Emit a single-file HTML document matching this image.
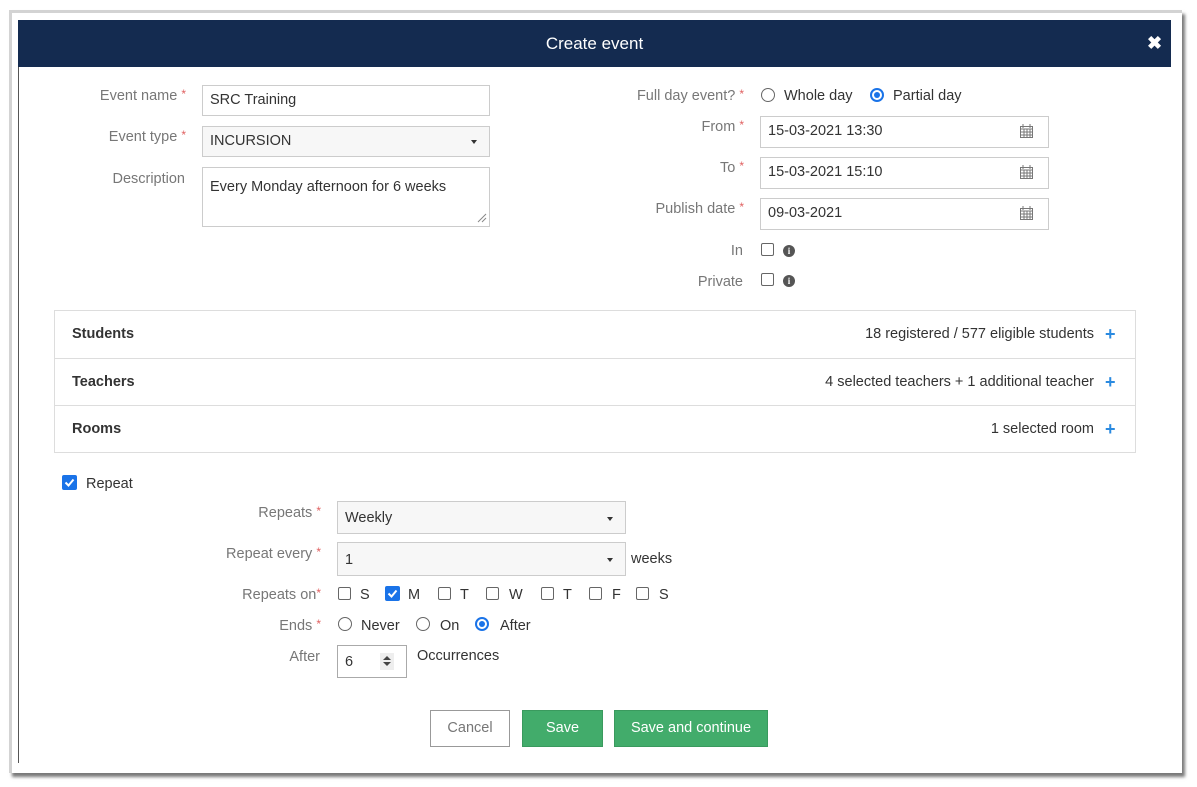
<!DOCTYPE html>
<html><head><style>
*{box-sizing:border-box;margin:0;padding:0}
body{width:1197px;height:787px;background:#fff;font-family:"Liberation Sans",sans-serif;font-size:14.5px;color:#333;position:relative;overflow:hidden}
.a{position:absolute}
.frame{left:9px;top:10px;width:1173px;height:763px;border:3px solid #d3d3d3;border-right:none;border-bottom:none;background:#fff;box-shadow:3px 4px 3px #7a7a7a}
.hdr{left:18px;top:20px;width:1153px;height:47px;background:#142b50;color:#fff;font-size:17px;text-align:center;line-height:47px}
.vl{left:18px;top:67px;width:1px;height:696px;background:#555}
.lbl{color:#777;text-align:right}
.req{color:#e06060;font-size:12px;vertical-align:top;position:relative;top:-1px}
.inp{border:1px solid #ccc;background:#fff;padding-left:7px;line-height:28px;color:#333}
.sel{background:#f7f7f7}
.caret{position:absolute;right:12px;top:13px;border-left:3.5px solid transparent;border-right:3.5px solid transparent;border-top:4px solid #333}
.cb{width:13px;height:13px;border:1px solid #666;border-radius:2px;background:#fff}
.rd{width:14px;height:14px;border:1px solid #666;border-radius:50%}
.rdk{width:14px;height:14px;border:2px solid #1a73e8;border-radius:50%;background:#fff}
.rdk:after{content:"";position:absolute;left:2px;top:2px;width:6px;height:6px;border-radius:50%;background:#1a73e8}
.info{width:12px;height:12px;border-radius:50%;background:#555;color:#fff;font:bold 9px "Liberation Serif",serif;text-align:center;line-height:12px}
.row{border:1px solid #ddd;background:#fff}
.plus{color:#2a8ae0;font-size:18px;font-weight:bold}
.btn{height:37px;line-height:35px;text-align:center;font-size:14.5px}
</style></head><body>
<div class="a frame"></div>
<div class="a hdr">Create event</div>
<div class="a" style="left:1147px;top:33px;color:#fff;font-size:18px;font-weight:bold">✖</div>
<div class="a vl"></div>

<div class="a lbl" style="left:60px;top:88px;width:126px">Event name <span class="req">*</span></div>
<div class="a inp" style="left:202px;top:85px;width:288px;height:31px">SRC Training</div>
<div class="a lbl" style="left:60px;top:129px;width:126px">Event type <span class="req">*</span></div>
<div class="a inp sel" style="left:202px;top:126px;width:288px;height:31px">INCURSION<span class="caret"></span></div>
<div class="a lbl" style="left:60px;top:171px;width:125px">Description</div>
<div class="a inp" style="left:202px;top:167px;width:288px;height:60px;line-height:20px;padding-top:9px">Every Monday afternoon for 6 weeks</div>
<svg class="a" style="left:477px;top:213px" width="10" height="10"><path d="M1 9L9 1M5 9L9 5" stroke="#888"/></svg>

<div class="a lbl" style="left:590px;top:88px;width:154px">Full day event? <span class="req">*</span></div>
<div class="a rd" style="left:761px;top:88px"></div><div class="a" style="left:784px;top:88px">Whole day</div>
<div class="a rdk" style="left:870px;top:88px"></div><div class="a" style="left:893px;top:88px">Partial day</div>
<div class="a lbl" style="left:600px;top:119px;width:144px">From <span class="req">*</span></div>
<div class="a inp" style="left:760px;top:116px;width:289px;height:32px">15-03-2021 13:30</div>
<div class="a lbl" style="left:600px;top:160px;width:144px">To <span class="req">*</span></div>
<div class="a inp" style="left:760px;top:157px;width:289px;height:32px">15-03-2021 15:10</div>
<div class="a lbl" style="left:600px;top:201px;width:144px">Publish date <span class="req">*</span></div>
<div class="a inp" style="left:760px;top:198px;width:289px;height:32px">09-03-2021</div>
<svg class="a" style="left:1020px;top:124px" width="13" height="14"><rect x="0.5" y="2.5" width="12" height="11" fill="none" stroke="#777"/><path d="M0 5h13M3 0v4M10 0v4M0.5 8h12M0.5 11h12M4 5v9M7 5v9M10 5v9" stroke="#777"/></svg>
<svg class="a" style="left:1020px;top:165px" width="13" height="14"><rect x="0.5" y="2.5" width="12" height="11" fill="none" stroke="#777"/><path d="M0 5h13M3 0v4M10 0v4M0.5 8h12M0.5 11h12M4 5v9M7 5v9M10 5v9" stroke="#777"/></svg>
<svg class="a" style="left:1020px;top:206px" width="13" height="14"><rect x="0.5" y="2.5" width="12" height="11" fill="none" stroke="#777"/><path d="M0 5h13M3 0v4M10 0v4M0.5 8h12M0.5 11h12M4 5v9M7 5v9M10 5v9" stroke="#777"/></svg>
<div class="a lbl" style="left:600px;top:243px;width:143px">In</div>
<div class="a cb" style="left:761px;top:243px"></div><div class="a info" style="left:783px;top:245px">i</div>
<div class="a lbl" style="left:600px;top:274px;width:143px">Private</div>
<div class="a cb" style="left:761px;top:273px"></div><div class="a info" style="left:783px;top:275px">i</div>

<div class="a row" style="left:54px;top:310px;width:1082px;height:49px"></div>
<div class="a row" style="left:54px;top:358px;width:1082px;height:48px"></div>
<div class="a row" style="left:54px;top:405px;width:1082px;height:48px"></div>
<div class="a" style="left:72px;top:326px;font-weight:bold">Students</div>
<div class="a" style="left:72px;top:374px;font-weight:bold">Teachers</div>
<div class="a" style="left:72px;top:421px;font-weight:bold">Rooms</div>
<div class="a" style="right:103px;top:326px">18 registered / 577 eligible students</div>
<div class="a" style="right:103px;top:374px">4 selected teachers + 1 additional teacher</div>
<div class="a" style="right:103px;top:421px">1 selected room</div>
<div class="a plus" style="left:1105px;top:324px">+</div>
<div class="a plus" style="left:1105px;top:372px">+</div>
<div class="a plus" style="left:1105px;top:419px">+</div>

<svg class="a" style="left:62px;top:475px" width="15" height="15"><rect width="15" height="15" rx="2" fill="#1a73e8"/><path d="M3.5 7.5l3 3 5-6" stroke="#fff" stroke-width="2" fill="none"/></svg>
<div class="a" style="left:86px;top:476px">Repeat</div>

<div class="a lbl" style="left:190px;top:505px;width:131px">Repeats <span class="req">*</span></div>
<div class="a inp sel" style="left:337px;top:501px;width:289px;height:33px;line-height:32px">Weekly<span class="caret" style="top:15px"></span></div>
<div class="a lbl" style="left:190px;top:546px;width:131px">Repeat every <span class="req">*</span></div>
<div class="a inp sel" style="left:337px;top:542px;width:289px;height:34px;line-height:34px">1<span class="caret" style="top:15px"></span></div>
<div class="a" style="left:631px;top:551px">weeks</div>
<div class="a lbl" style="left:190px;top:587px;width:131px">Repeats on<span class="req">*</span></div>
<div class="a cb" style="left:338px;top:587px"></div><div class="a" style="left:360px;top:587px">S</div>
<svg class="a" style="left:385px;top:586px" width="15" height="15"><rect width="15" height="15" rx="2" fill="#1a73e8"/><path d="M3.5 7.5l3 3 5-6" stroke="#fff" stroke-width="2" fill="none"/></svg><div class="a" style="left:408px;top:587px">M</div>
<div class="a cb" style="left:438px;top:587px"></div><div class="a" style="left:460px;top:587px">T</div>
<div class="a cb" style="left:486px;top:587px"></div><div class="a" style="left:509px;top:587px">W</div>
<div class="a cb" style="left:541px;top:587px"></div><div class="a" style="left:563px;top:587px">T</div>
<div class="a cb" style="left:589px;top:587px"></div><div class="a" style="left:612px;top:587px">F</div>
<div class="a cb" style="left:636px;top:587px"></div><div class="a" style="left:659px;top:587px">S</div>
<div class="a lbl" style="left:200px;top:618px;width:121px">Ends <span class="req">*</span></div>
<div class="a rd" style="left:338px;top:617px"></div><div class="a" style="left:361px;top:618px">Never</div>
<div class="a rd" style="left:416px;top:617px"></div><div class="a" style="left:440px;top:618px">On</div>
<div class="a rdk" style="left:475px;top:617px"></div><div class="a" style="left:500px;top:618px">After</div>
<div class="a lbl" style="left:200px;top:649px;width:120px">After</div>
<div class="a inp" style="left:337px;top:645px;width:70px;height:33px;line-height:32px;border-color:#aaa">6</div>
<div class="a" style="left:380px;top:653px;width:14px;height:17px;background:#eee"></div>
<svg class="a" style="left:383px;top:655px" width="8" height="12"><path d="M0 5L4 1L8 5ZM0 7L4 11L8 7Z" fill="#444"/></svg>
<div class="a" style="left:417px;top:648px">Occurrences</div>

<div class="a btn" style="left:430px;top:710px;width:80px;border:1px solid #999;color:#777;background:#fff">Cancel</div>
<div class="a btn" style="left:522px;top:710px;width:81px;background:#42ac6b;color:#fff;border:1px solid #3a9a5e">Save</div>
<div class="a btn" style="left:614px;top:710px;width:154px;background:#42ac6b;color:#fff;border:1px solid #3a9a5e">Save and continue</div>
</body></html>
